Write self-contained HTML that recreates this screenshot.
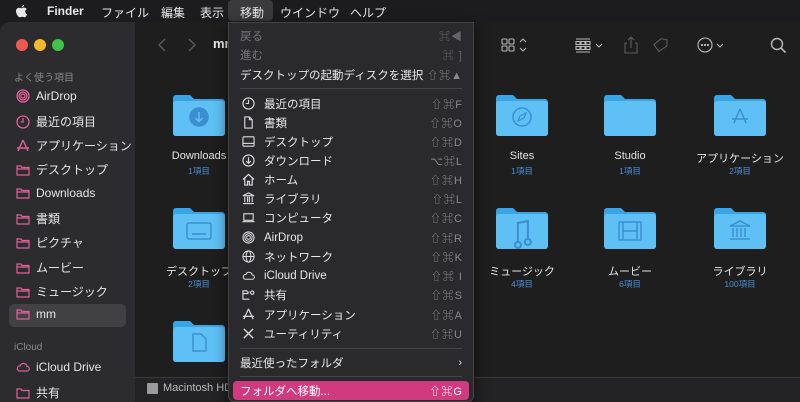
<!DOCTYPE html><html><head><meta charset="utf-8"><style>
*{margin:0;padding:0;box-sizing:border-box}
body{width:800px;height:402px;overflow:hidden;background:#1e1e1e;font-family:"Liberation Sans","Noto Sans CJK JP",sans-serif;position:relative;color:#ddd}
.abs{position:absolute}
#mb{left:0;top:0;width:800px;height:22px;background:#1c1c1e;font-size:12px;color:#e8e8e8}
#mb span{position:absolute;top:4px}
#side{left:0;top:22px;width:135px;height:380px;background:#2c2b2d;border-radius:10px 0 0 0}
.si{position:absolute;left:16px;font-size:12px;color:#e6e6e6;display:flex;align-items:center;gap:6px;white-space:nowrap}
.si svg{width:14px;height:14px;flex:none}
.hd{position:absolute;left:14px;font-size:10px;color:#8a8a8a}
#main{left:135px;top:22px;width:665px;height:380px;background:#1e1e1e}
.lb{position:absolute;width:110px;text-align:center;font-size:11px;color:#e4e4e4}
.ct{position:absolute;width:110px;text-align:center;font-size:8.5px;color:#4a8fd9}
#menu{left:228px;top:22px;width:246px;height:380px;background:#2a2a2c;border:1px solid #444;border-radius:0 0 6px 6px;box-shadow:0 4px 14px rgba(0,0,0,.6)}
.mi{position:absolute;left:11px;right:10px;height:19px;font-size:11.5px;color:#e8e8e8;display:flex;align-items:center;white-space:nowrap}
.mi .ic{width:16px;margin-right:8px;display:flex;justify-content:center}
.mi .ic svg{width:13px;height:13px}
.mi .k{margin-left:auto;flex:none;color:#8a8a8a;font-size:11px;letter-spacing:1px}
.sep{position:absolute;left:11px;right:11px;height:1px;background:#464648}
</style></head><body>
<div id="mb" class="abs">
<svg class="abs" style="left:15px;top:4px" width="13" height="15" viewBox="0 0 13 15"><path d="M9 1c0 1.3-1 2.5-2.3 2.5C6.6 2.2 7.7 1 9 1zM6.5 4.2c.7 0 1.6-.6 2.600-.6 1 0 2 .5 2.6 1.4-2.2 1.3-1.8 4.4.4 5.2-.5 1.4-1.4 3.1-2.6 3.1-.9 0-1.2-.6-2.3-.6s-1.5.6-2.3.6C3.4 13.3 1 10 1 7.3 1 5 2.5 3.7 4 3.7c1 0 1.8.5 2.5.5z" fill="#e8e8e8"/></svg>
<span style="left:47px;font-weight:bold">Finder</span>
<span style="left:101px">ファイル</span>
<span style="left:161px">編集</span>
<span style="left:200px">表示</span>
<div class="abs" style="left:228px;top:0;width:45px;height:21px;background:#3a3a3c;border-radius:4px"></div>
<span style="left:240px">移動</span>
<span style="left:280px">ウインドウ</span>
<span style="left:350px">ヘルプ</span>
</div>

<div id="side" class="abs">
<div class="abs" style="left:16px;top:17px;width:12px;height:12px;border-radius:50%;background:#ee5a52"></div>
<div class="abs" style="left:34px;top:17px;width:12px;height:12px;border-radius:50%;background:#f3b92e"></div>
<div class="abs" style="left:52px;top:17px;width:12px;height:12px;border-radius:50%;background:#3fc348"></div>
<div class="hd" style="top:47px">よく使う項目</div>
<div class="abs" style="left:9px;top:282px;width:117px;height:23px;background:#414143;border-radius:5px"></div>
<div class="hd" style="top:320px">iCloud</div>
</div>
<div class="si" style="top:89px"><svg viewBox="0 0 14 14" fill="none" stroke="#e0609a" stroke-width="1.3"><circle cx="7" cy="7" r="6"/><circle cx="7" cy="7" r="4"/><circle cx="7" cy="7" r="2"/></svg>AirDrop</div>
<div class="si" style="top:113px"><svg viewBox="0 0 14 14" fill="none" stroke="#e0609a" stroke-width="1.3"><circle cx="7" cy="7" r="6"/><path d="M7 3v4H4.5"/></svg>最近の項目</div>
<div class="si" style="top:137px"><svg viewBox="0 0 14 14" fill="none" stroke="#e0609a" stroke-width="1.4"><path d="M7 1L2 12M7 1l5 11M1 9h12"/></svg>アプリケーション</div>
<div class="si" style="top:161px"><svg viewBox="0 0 14 14" fill="none" stroke="#e0609a" stroke-width="1.2"><path d="M1 3h4l1 1.5h7V12H1z M1 6h12"/></svg>デスクトップ</div>
<div class="si" style="top:186px"><svg viewBox="0 0 14 14" fill="none" stroke="#e0609a" stroke-width="1.2"><path d="M1 3h4l1 1.5h7V12H1z M1 6h12"/></svg>Downloads</div>
<div class="si" style="top:210px"><svg viewBox="0 0 14 14" fill="none" stroke="#e0609a" stroke-width="1.2"><path d="M1 3h4l1 1.5h7V12H1z M1 6h12"/></svg>書類</div>
<div class="si" style="top:234px"><svg viewBox="0 0 14 14" fill="none" stroke="#e0609a" stroke-width="1.2"><path d="M1 3h4l1 1.5h7V12H1z M1 6h12"/></svg>ピクチャ</div>
<div class="si" style="top:259px"><svg viewBox="0 0 14 14" fill="none" stroke="#e0609a" stroke-width="1.2"><path d="M1 3h4l1 1.5h7V12H1z M1 6h12"/></svg>ムービー</div>
<div class="si" style="top:283px"><svg viewBox="0 0 14 14" fill="none" stroke="#e0609a" stroke-width="1.2"><path d="M1 3h4l1 1.5h7V12H1z M1 6h12"/></svg>ミュージック</div>
<div class="si" style="top:307px"><svg viewBox="0 0 14 14" fill="none" stroke="#e0609a" stroke-width="1.2"><path d="M1 3h4l1 1.5h7V12H1z M1 6h12"/></svg>mm</div>
<div class="si" style="top:360px"><svg viewBox="0 0 14 14" fill="none" stroke="#e0609a" stroke-width="1.2"><path d="M3.5 11h7.5a2.3 2.3 0 000-4.6A3.5 3.5 0 004.2 6 2.5 2.5 0 003.5 11z"/></svg>iCloud Drive</div>
<div class="si" style="top:384px"><svg viewBox="0 0 14 14" fill="none" stroke="#e0609a" stroke-width="1.2"><path d="M1 3h4l1 1.5h7V12H1z"/></svg>共有</div>

<div id="main" class="abs">
<svg class="abs" style="left:22px;top:16px" width="40" height="14" viewBox="0 0 40 14" fill="none" stroke="#5a5a5c" stroke-width="1.4"><path d="M8 1L2 7l6 6M32 1l6 6-6 6"/></svg>
<div class="abs" style="left:78px;top:14px;font-size:13px;font-weight:bold;color:#eee">mm</div>
<svg class="abs" style="left:365px;top:14px" width="300" height="18" viewBox="0 0 300 18" fill="none" stroke="#b8b8b8" stroke-width="1.1">
<rect x="2" y="3" width="5" height="5" rx="1"/><rect x="9" y="3" width="5" height="5" rx="1"/><rect x="2" y="10" width="5" height="5" rx="1"/><rect x="9" y="10" width="5" height="5" rx="1"/>
<path d="M20 6l3-3 3 3M20 12l3 3 3-3"/>
<path d="M76 3h14M76 16h14"/><rect x="76" y="5.5" width="4" height="3"/><rect x="81" y="5.5" width="4" height="3"/><rect x="86" y="5.5" width="4" height="3"/><rect x="76" y="10.5" width="4" height="3"/><rect x="81" y="10.5" width="4" height="3"/><rect x="86" y="10.5" width="4" height="3"/>
<path d="M96 8l3 3 3-3"/>
<g stroke="#5c5c5e"><path d="M127 7h-2v10h12V7h-2M131 12V1M128 4l3-3 3 3"/><path d="M160 3h6l1 6-7 7-6-6z" transform="rotate(10 162 9)"/></g>
<circle cx="205" cy="9" r="7"/><circle cx="202" cy="9" r=".6" fill="#b8b8b8"/><circle cx="205" cy="9" r=".6" fill="#b8b8b8"/><circle cx="208" cy="9" r=".6" fill="#b8b8b8"/>
<path d="M217 8l3 3 3-3"/>
<circle cx="277" cy="8" r="5.5" stroke-width="1.4"/><path d="M281 12l4.5 4.5" stroke-width="1.6"/>
</svg>
<div class="abs" style="left:0;top:355px;width:665px;height:25px;background:#232325;border-top:1px solid #3a3a3a"></div>
<div class="abs" style="left:12px;top:361px;width:11px;height:11px;background:#9a9a9a;border-radius:1px"></div>
<div class="abs" style="left:28px;top:360px;font-size:11px;color:#bbb">Macintosh HD</div>
</div>

<svg class="abs" style="left:0;top:0" width="800" height="402">
<defs><g id="f"><path d="M0 4a3 3 0 013-3h14l4 4h28a3 3 0 013 3v31a3 3 0 01-3 3H3a3 3 0 01-3-3z" fill="#3aa5e4"/><path d="M0 10a3 3 0 013-3h46a3 3 0 013 3v29a3 3 0 01-3 3H3a3 3 0 01-3-3z" fill="#5ec0f5"/></g></defs>
<use href="#f" x="173" y="94"/><use href="#f" x="496" y="94"/><use href="#f" x="604" y="94"/><use href="#f" x="714" y="94"/>
<use href="#f" x="173" y="207"/><use href="#f" x="496" y="207"/><use href="#f" x="604" y="207"/><use href="#f" x="714" y="207"/>
<use href="#f" x="173" y="320"/>
<g fill="none" stroke="#3b8fd0" stroke-width="1.5">
<circle cx="199" cy="117" r="9" fill="#3b8fd0"/><path d="M199 112v9M195.5 118l3.5 3.5 3.5-3.5" stroke="#5ec0f5"/>
<circle cx="522" cy="117" r="9"/><path d="M526 113l-6 3-2 5 6-3z" stroke-width="1.2"/>
<path d="M740 109l-6 14M740 109l6 14M732 119h16"/>
<rect x="187" y="223" width="24" height="16" rx="2"/><path d="M192 234h14"/>
<path d="M518 242a3 3 0 11-.1 0V223l10-2v18a3 3 0 11-.1 0" stroke-width="2"/>
<rect x="619" y="222" width="22" height="18" rx="1"/><path d="M623 222v18M637 222v18M623 231h14"/>
<path d="M730 226l10-5 10 5zM733 228v9M737 228v9M741 228v9M745 228v9M730 239h20"/>
<path d="M193 334h8l5 5v12h-13z"/>
</g>
</svg>
<div class="lb" style="left:144px;top:150px">Downloads</div><div class="ct" style="left:144px;top:165px">1項目</div>
<div class="lb" style="left:467px;top:150px">Sites</div><div class="ct" style="left:467px;top:165px">1項目</div>
<div class="lb" style="left:575px;top:150px">Studio</div><div class="ct" style="left:575px;top:165px">1項目</div>
<div class="lb" style="left:685px;top:150px">アプリケーション</div><div class="ct" style="left:685px;top:165px">2項目</div>
<div class="lb" style="left:144px;top:263px">デスクトップ</div><div class="ct" style="left:144px;top:278px">2項目</div>
<div class="lb" style="left:467px;top:263px">ミュージック</div><div class="ct" style="left:467px;top:278px">4項目</div>
<div class="lb" style="left:575px;top:263px">ムービー</div><div class="ct" style="left:575px;top:278px">6項目</div>
<div class="lb" style="left:685px;top:263px">ライブラリ</div><div class="ct" style="left:685px;top:278px">100項目</div>

<div id="menu" class="abs">
<div class="mi" style="top:3px;color:#777">戻る<span class="k" style="color:#666">⌘◀</span></div>
<div class="mi" style="top:22px;color:#777">進む<span class="k" style="color:#666">⌘ ]</span></div>
<div class="mi" style="top:42px">デスクトップの起動ディスクを選択<span class="k">⇧⌘▲</span></div>
<div class="sep" style="top:65px"></div>
<div class="mi" style="top:71px"><span class="ic"><svg viewBox="0 0 14 14" fill="none" stroke="#ddd" stroke-width="1.2"><circle cx="7" cy="7" r="6"/><path d="M7 3v4H4"/></svg></span>最近の項目<span class="k">⇧⌘F</span></div>
<div class="mi" style="top:90px"><span class="ic"><svg viewBox="0 0 14 14" fill="none" stroke="#ddd" stroke-width="1.2"><path d="M3 1h5l3 3v9H3zM8 1v3h3"/></svg></span>書類<span class="k">⇧⌘O</span></div>
<div class="mi" style="top:109px"><span class="ic"><svg viewBox="0 0 14 14" fill="none" stroke="#ddd" stroke-width="1.2"><rect x="1" y="2" width="12" height="10" rx="1"/><path d="M1 9h12"/></svg></span>デスクトップ<span class="k">⇧⌘D</span></div>
<div class="mi" style="top:128px"><span class="ic"><svg viewBox="0 0 14 14" fill="none" stroke="#ddd" stroke-width="1.2"><circle cx="7" cy="7" r="6"/><path d="M7 3.5v6M4.5 7.5L7 10l2.5-2.5"/></svg></span>ダウンロード<span class="k">⌥⌘L</span></div>
<div class="mi" style="top:147px"><span class="ic"><svg viewBox="0 0 14 14" fill="none" stroke="#ddd" stroke-width="1.3"><path d="M1 7l6-5.5L13 7M3 5.5V13h3V9h2v4h3V5.5"/></svg></span>ホーム<span class="k">⇧⌘H</span></div>
<div class="mi" style="top:166px"><span class="ic"><svg viewBox="0 0 14 14" fill="none" stroke="#ddd" stroke-width="1.2"><path d="M1 4l6-3 6 3zM3 5v6M6 5v6M8 5v6M11 5v6M1 12.5h12"/></svg></span>ライブラリ<span class="k">⇧⌘L</span></div>
<div class="mi" style="top:185px"><span class="ic"><svg viewBox="0 0 14 14" fill="none" stroke="#ddd" stroke-width="1.2"><rect x="2" y="3" width="10" height="7"/><path d="M0.5 11.5h13"/></svg></span>コンピュータ<span class="k">⇧⌘C</span></div>
<div class="mi" style="top:205px"><span class="ic"><svg viewBox="0 0 14 14" fill="none" stroke="#ddd" stroke-width="1.1"><circle cx="7" cy="7" r="6"/><circle cx="7" cy="7" r="4"/><circle cx="7" cy="7" r="2"/></svg></span>AirDrop<span class="k">⇧⌘R</span></div>
<div class="mi" style="top:224px"><span class="ic"><svg viewBox="0 0 14 14" fill="none" stroke="#ddd" stroke-width="1.1"><circle cx="7" cy="7" r="6"/><ellipse cx="7" cy="7" rx="2.5" ry="6"/><path d="M1 7h12"/></svg></span>ネットワーク<span class="k">⇧⌘K</span></div>
<div class="mi" style="top:243px"><span class="ic"><svg viewBox="0 0 14 14" fill="none" stroke="#ddd" stroke-width="1.1"><path d="M3.5 11h7.5a2.3 2.3 0 000-4.6A3.5 3.5 0 004.2 6 2.5 2.5 0 003.5 11z"/></svg></span>iCloud Drive<span class="k">⇧⌘ I</span></div>
<div class="mi" style="top:262px"><span class="ic"><svg viewBox="0 0 14 14" fill="none" stroke="#ddd" stroke-width="1.2"><path d="M8 12H1V3h4l1 1.5h2M1 6h6"/><circle cx="11" cy="5" r="1.8"/></svg></span>共有<span class="k">⇧⌘S</span></div>
<div class="mi" style="top:282px"><span class="ic"><svg viewBox="0 0 14 14" fill="none" stroke="#ddd" stroke-width="1.3"><path d="M7 1L2 12M7 1l5 11M1 9h12"/></svg></span>アプリケーション<span class="k">⇧⌘A</span></div>
<div class="mi" style="top:301px"><span class="ic"><svg viewBox="0 0 14 14" fill="none" stroke="#ddd" stroke-width="1.5"><path d="M2 2l10 10M12 2L2 12"/></svg></span>ユーティリティ<span class="k">⇧⌘U</span></div>
<div class="sep" style="top:325px"></div>
<div class="mi" style="top:330px">最近使ったフォルダ<span class="k" style="color:#ddd">›</span></div>
<div class="sep" style="top:353px"></div>
<div class="abs" style="left:4px;top:358px;width:236px;height:19px;background:#d13a7e;border-radius:4px"></div>
<div class="mi" style="top:358px;color:#fff">フォルダへ移動...<span class="k" style="color:#fff">⇧⌘G</span></div>
</div>
</body></html>
